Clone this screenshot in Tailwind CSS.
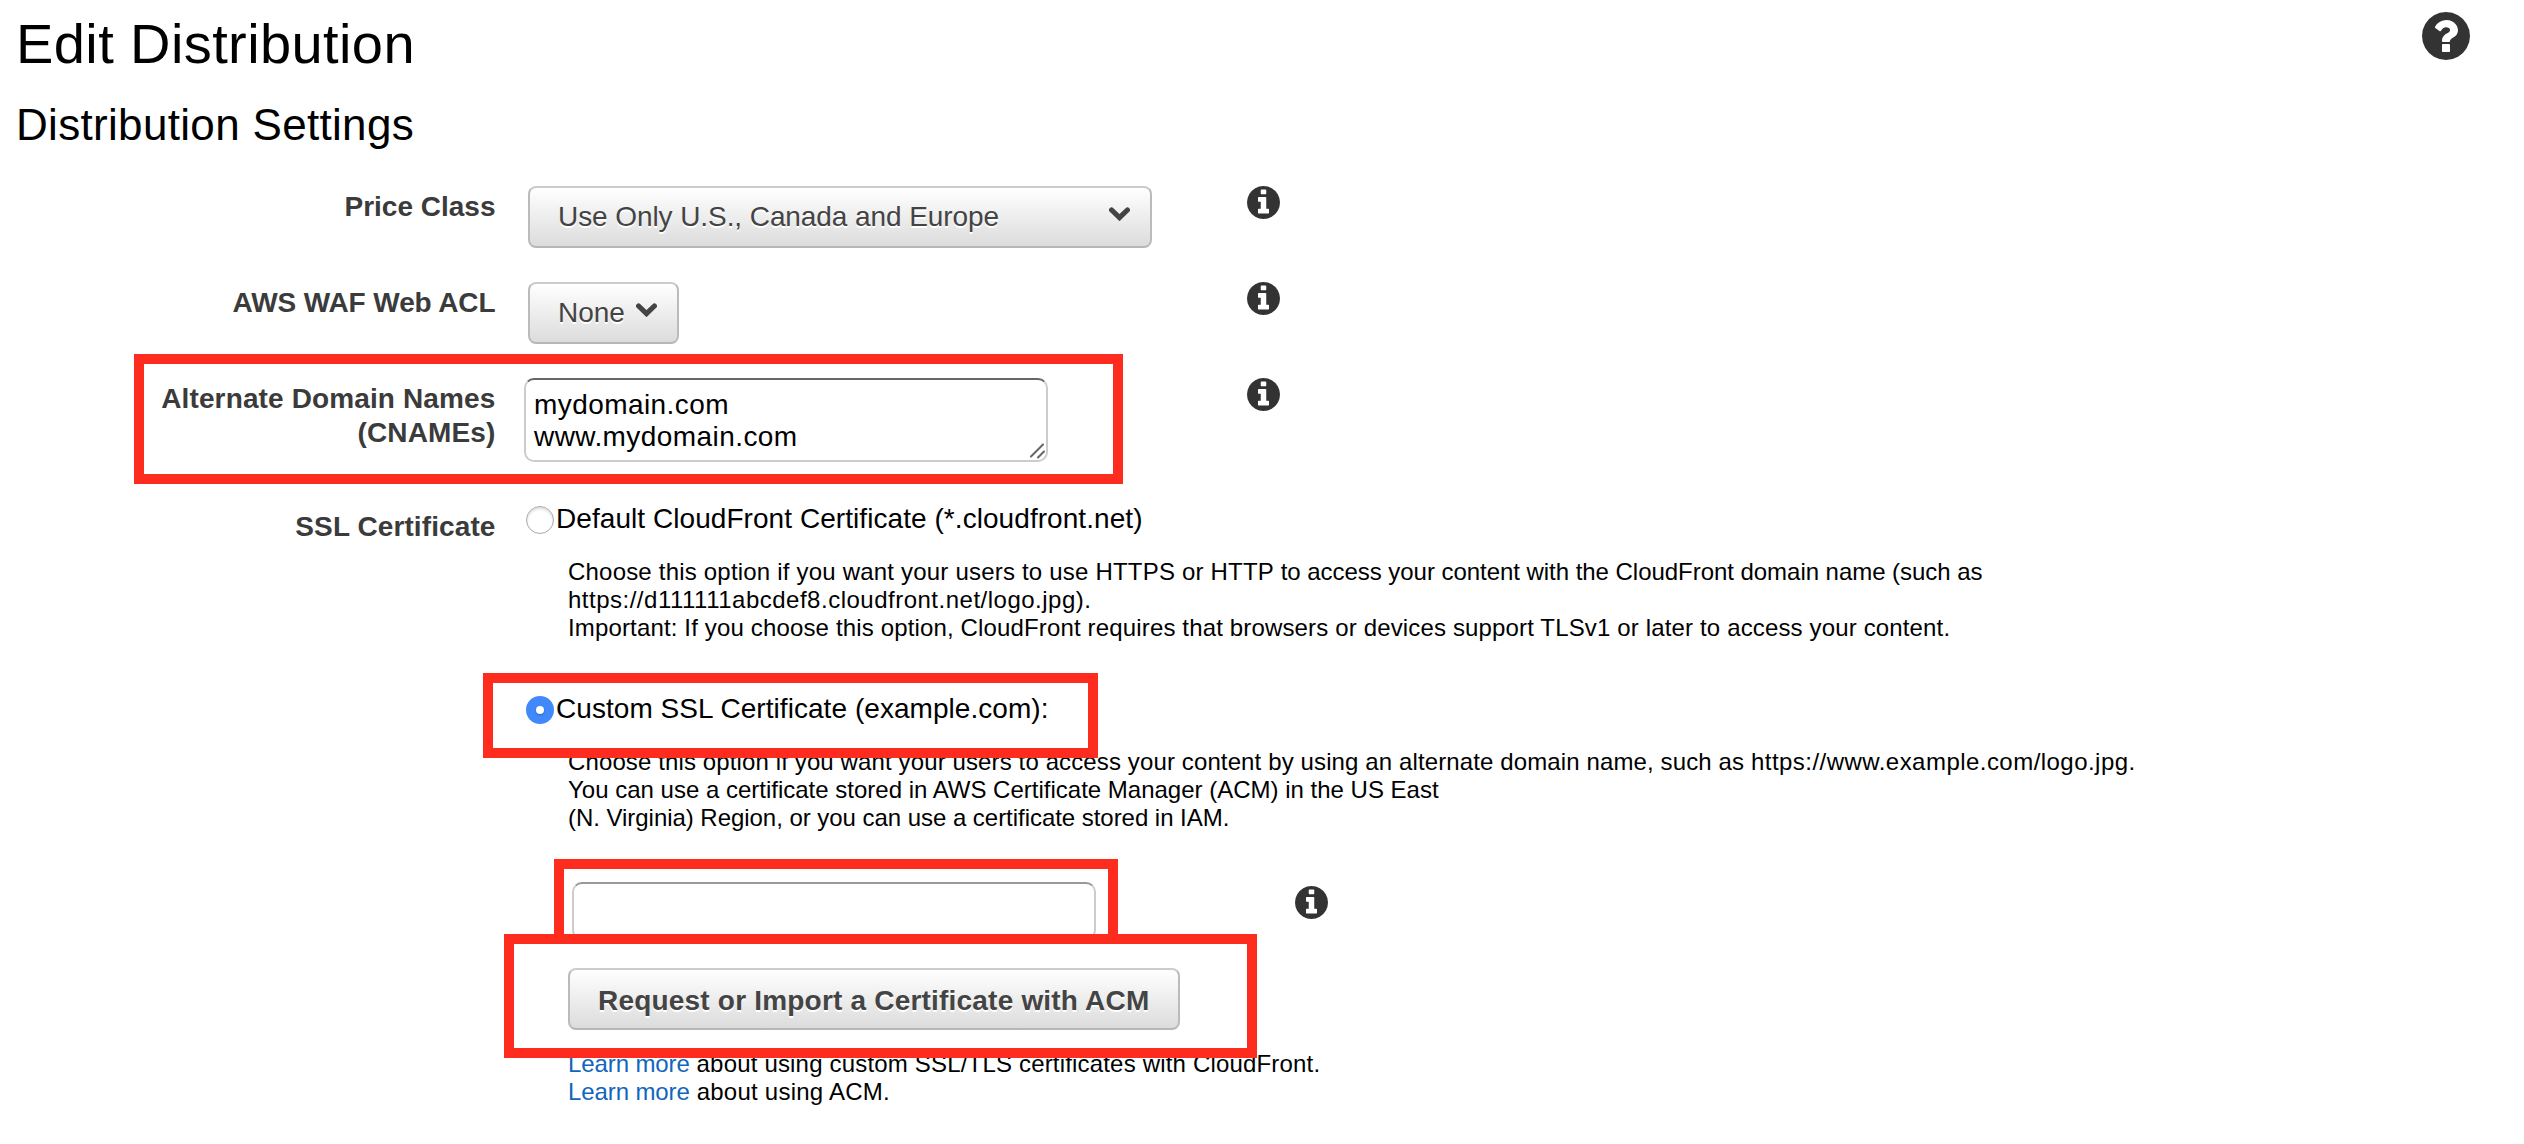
<!DOCTYPE html>
<html lang="en">
<head>
<meta charset="utf-8">
<title>Edit Distribution</title>
<script src="https://cdn.jsdelivr.net/npm/@tailwindcss/browser@4"></script>
</head>
<body class="relative h-[1144px] overflow-hidden bg-white font-['Liberation_Sans',Arial,sans-serif] text-black">
<svg class="hidden">
  <symbol id="info" viewBox="0 0 1536 1536"><path d="M1024 1248v-160q0-14-9-23t-23-9h-96V544q0-14-9-23t-23-9H544q-14 0-23 9t-9 23v160q0 14 9 23t23 9h96v320h-96q-14 0-23 9t-9 23v160q0 14 9 23t23 9h448q14 0 23-9t9-23zM896 352V192q0-14-9-23t-23-9H672q-14 0-23 9t-9 23v160q0 14 9 23t23 9h192q14 0 23-9t9-23zm640 416q0 209-103 385.500T1153.500 1433 768 1536t-385.500-103T103 1153.500 0 768t103-385.500T382.500 103 768 0t385.500 103T1433 382.500 1536 768z"/></symbol>
  <symbol id="help" viewBox="0 0 1536 1536"><path d="M896 1248v-192q0-14-9-23t-23-9H672q-14 0-23 9t-9 23v192q0 14 9 23t23 9h192q14 0 23-9t9-23zm256-672q0-88-55.500-163T958 297t-170-41q-243 0-371 213-15 24 8 42l132 100q7 6 19 6 16 0 25-12 53-68 86-92 34-24 86-24 48 0 85.500 26t37.500 59q0 38-20 61t-68 45q-63 28-115.500 86.500T640 892v36q0 14 9 23t23 9h192q14 0 23-9t9-23q0-19 21.500-49.500T972 829q32-18 49-28.500t46-35 44.500-48 28-60.500 12.500-81zm384 192q0 209-103 385.500T1153.500 1433 768 1536t-385.500-103T103 1153.500 0 768t103-385.500T382.500 103 768 0t385.500 103T1433 382.500 1536 768z"/></symbol>
  <symbol id="chevron" viewBox="0 0 21 14"><path d="M2.600 3 10.500 10.600 18.400 3" fill="none" stroke="currentColor" stroke-width="5.200" stroke-linejoin="miter" stroke-linecap="round"/></symbol>
</svg>

<header class="flex h-[77px] items-start justify-between pt-3 pr-[54px] pl-4">
  <h1 class="text-[56px] leading-[64px] tracking-[0.4px]">Edit Distribution</h1>
  <svg class="size-12 fill-[#333]"><use href="#help"/></svg>
</header>
<h2 class="mt-[23px] pl-4 text-[44px] leading-[50px] tracking-[0.32px]">Distribution Settings</h2>

<form class="mt-9 grid grid-cols-[495.500px_695.500px_auto] grid-rows-[96px_96px_128px_auto] items-start gap-x-7 text-[28px]">
  <label class="pt-1 text-right leading-[34px] font-bold text-[#3b3b3b]">Price Class</label>
  <div class="ml-[4.500px] flex h-[62px] w-[624px] items-start justify-between rounded-lg border-2 border-[#ccc] border-b-[#b7b7b7] border-x-[#bbb] bg-linear-to-b from-white to-[#dcdcdc] pr-5 pl-7 text-[#444] text-shadow-[0_2px_0_#fff]">
    <span class="pt-3 leading-[34px] tracking-[-0.08px]">Use Only U.S., Canada and Europe</span>
    <svg class="mt-[19px] h-3.5 w-[21px]"><use href="#chevron"/></svg>
  </div>
  <svg class="size-[33px] fill-[#333]"><use href="#info"/></svg>

  <label class="pt-1 text-right leading-[34px] font-bold tracking-[-0.1px] text-[#3b3b3b]">AWS WAF Web ACL</label>
  <div class="ml-[4.500px] flex h-[62px] w-[151px] items-start justify-between rounded-lg border-2 border-[#ccc] border-b-[#b7b7b7] border-x-[#bbb] bg-linear-to-b from-white to-[#dcdcdc] pr-5 pl-7 text-[#444] text-shadow-[0_2px_0_#fff]">
    <span class="pt-3 leading-[34px] tracking-[-0.08px]">None</span>
    <svg class="mt-[19px] h-3.5 w-[21px]"><use href="#chevron"/></svg>
  </div>
  <svg class="size-[33px] fill-[#333]"><use href="#info"/></svg>

  <label class="pt-1 text-right leading-[34px] font-bold tracking-[0.13px] text-[#3b3b3b]">Alternate Domain Names<br>(CNAMEs)</label>
  <div class="ml-[0.500px] flex h-[84px] w-[524px] items-end justify-between rounded-[10px] border-2 border-[#ccc] border-t-[#666]">
    <div class="self-start pt-[9px] pl-2 leading-8 tracking-[0.43px]">mydomain.com<br>www.mydomain.com</div>
    <svg class="mb-px size-4" viewBox="0 0 16 16" stroke="#666" stroke-width="2" stroke-linecap="round"><path d="M1 13.500 13 1.500M8 14.500 14 8.500"/></svg>
  </div>
  <svg class="size-[33px] fill-[#333]"><use href="#info"/></svg>

  <label class="pt-1 text-right leading-[34px] font-bold tracking-[0.1px] text-[#3b3b3b]">SSL Certificate</label>
  <div class="col-span-2 ml-[0.500px] flex flex-col items-start whitespace-nowrap">
    <div class="flex h-[52px] items-start gap-0.5 pl-0.5">
      <span class="size-7 rounded-full border border-[#aaa] bg-white inset-shadow-[0_2px_3px_#ddd]"></span>
      <span class="leading-[26px] tracking-[0.06px]">Default CloudFront Certificate (*.cloudfront.net)</span>
    </div>
    <div class="flex h-[138px] flex-col pl-11 text-2xl leading-7">
      <span class="leading-7 tracking-[-0.04px]"><span class="tracking-[0.2px]">Choose this option if you want your users to use HTTPS or HTTP</span> to access your content with the CloudFront domain name (such as</span>
      <span class="leading-7 tracking-[0.5px]">https://d111111abcdef8.cloudfront.net/logo.jpg).</span>
      <span class="leading-7 tracking-[0.15px]">Important: If you choose this option, CloudFront requires that browsers or devices support TLSv1 or later to access your content.</span>
    </div>
    <div class="flex h-[52px] items-start gap-0.5 pl-0.5">
      <span class="grid size-7 place-items-center rounded-full bg-[#4189fa]"><span class="size-2 rounded-full bg-white shadow-[0_1px_2px_#2a62c0]"></span></span>
      <span class="leading-[26px] tracking-[0.05px]">Custom SSL Certificate (example.com):</span>
    </div>
    <div class="flex h-[134px] flex-col pl-11 text-2xl">
      <span class="leading-7 tracking-[0.12px]">Choose this option if you want your users to access your content by using an alternate domain name, such as <span class="tracking-[0.46px]">https://www.example.com/logo.jpg.</span></span>
      <span class="leading-7">You can use a certificate stored in AWS Certificate Manager (ACM) in the US East</span>
      <span class="leading-7 tracking-[-0.04px]">(N. Virginia) Region, or you can use a certificate stored in IAM.</span>
    </div>
    <div class="flex h-[86px] items-start gap-[199px] pl-12">
      <span class="h-[58px] w-[524px] rounded-[10px] border-2 border-[#ccc] border-t-[#999]"></span>
      <svg class="mt-1 size-[33px] fill-[#333]"><use href="#info"/></svg>
    </div>
    <div class="ml-11 flex h-[62px] w-[612px] items-start rounded-lg border-2 border-[#ccc] border-b-[#b7b7b7] border-x-[#bbb] bg-linear-to-b from-white to-[#dcdcdc] pl-7 font-bold text-[#444] text-shadow-[0_2px_0_#fff]">
      <span class="pt-3.5 leading-[34px] tracking-[0.2px]">Request or Import a Certificate with ACM</span>
    </div>
    <div class="mt-5 flex flex-col pl-11 text-2xl leading-7">
      <span class="tracking-[0.18px]"><a class="tracking-[-0.1px] text-[#1166bb]">Learn more</a> about using custom SSL/TLS certificates with CloudFront.</span>
      <span class="tracking-[0.24px]"><a class="tracking-[-0.1px] text-[#1166bb]">Learn more</a> about using ACM.</span>
    </div>
  </div>
</form>

<!-- Annotation frames over the form -->
<div class="absolute top-[354px] left-[134px] h-[130px] w-[989px] border-10 border-[#fe2b1f]"></div>
<div class="absolute top-[673px] left-[483px] h-[85px] w-[615px] border-10 border-[#fe2b1f]"></div>
<div class="absolute top-[859px] left-[554px] h-[85px] w-[564px] border-10 border-[#fe2b1f]"></div>
<div class="absolute top-[933.500px] left-[504px] h-[124px] w-[753px] border-10 border-[#fe2b1f]"></div>
</body>
</html>
